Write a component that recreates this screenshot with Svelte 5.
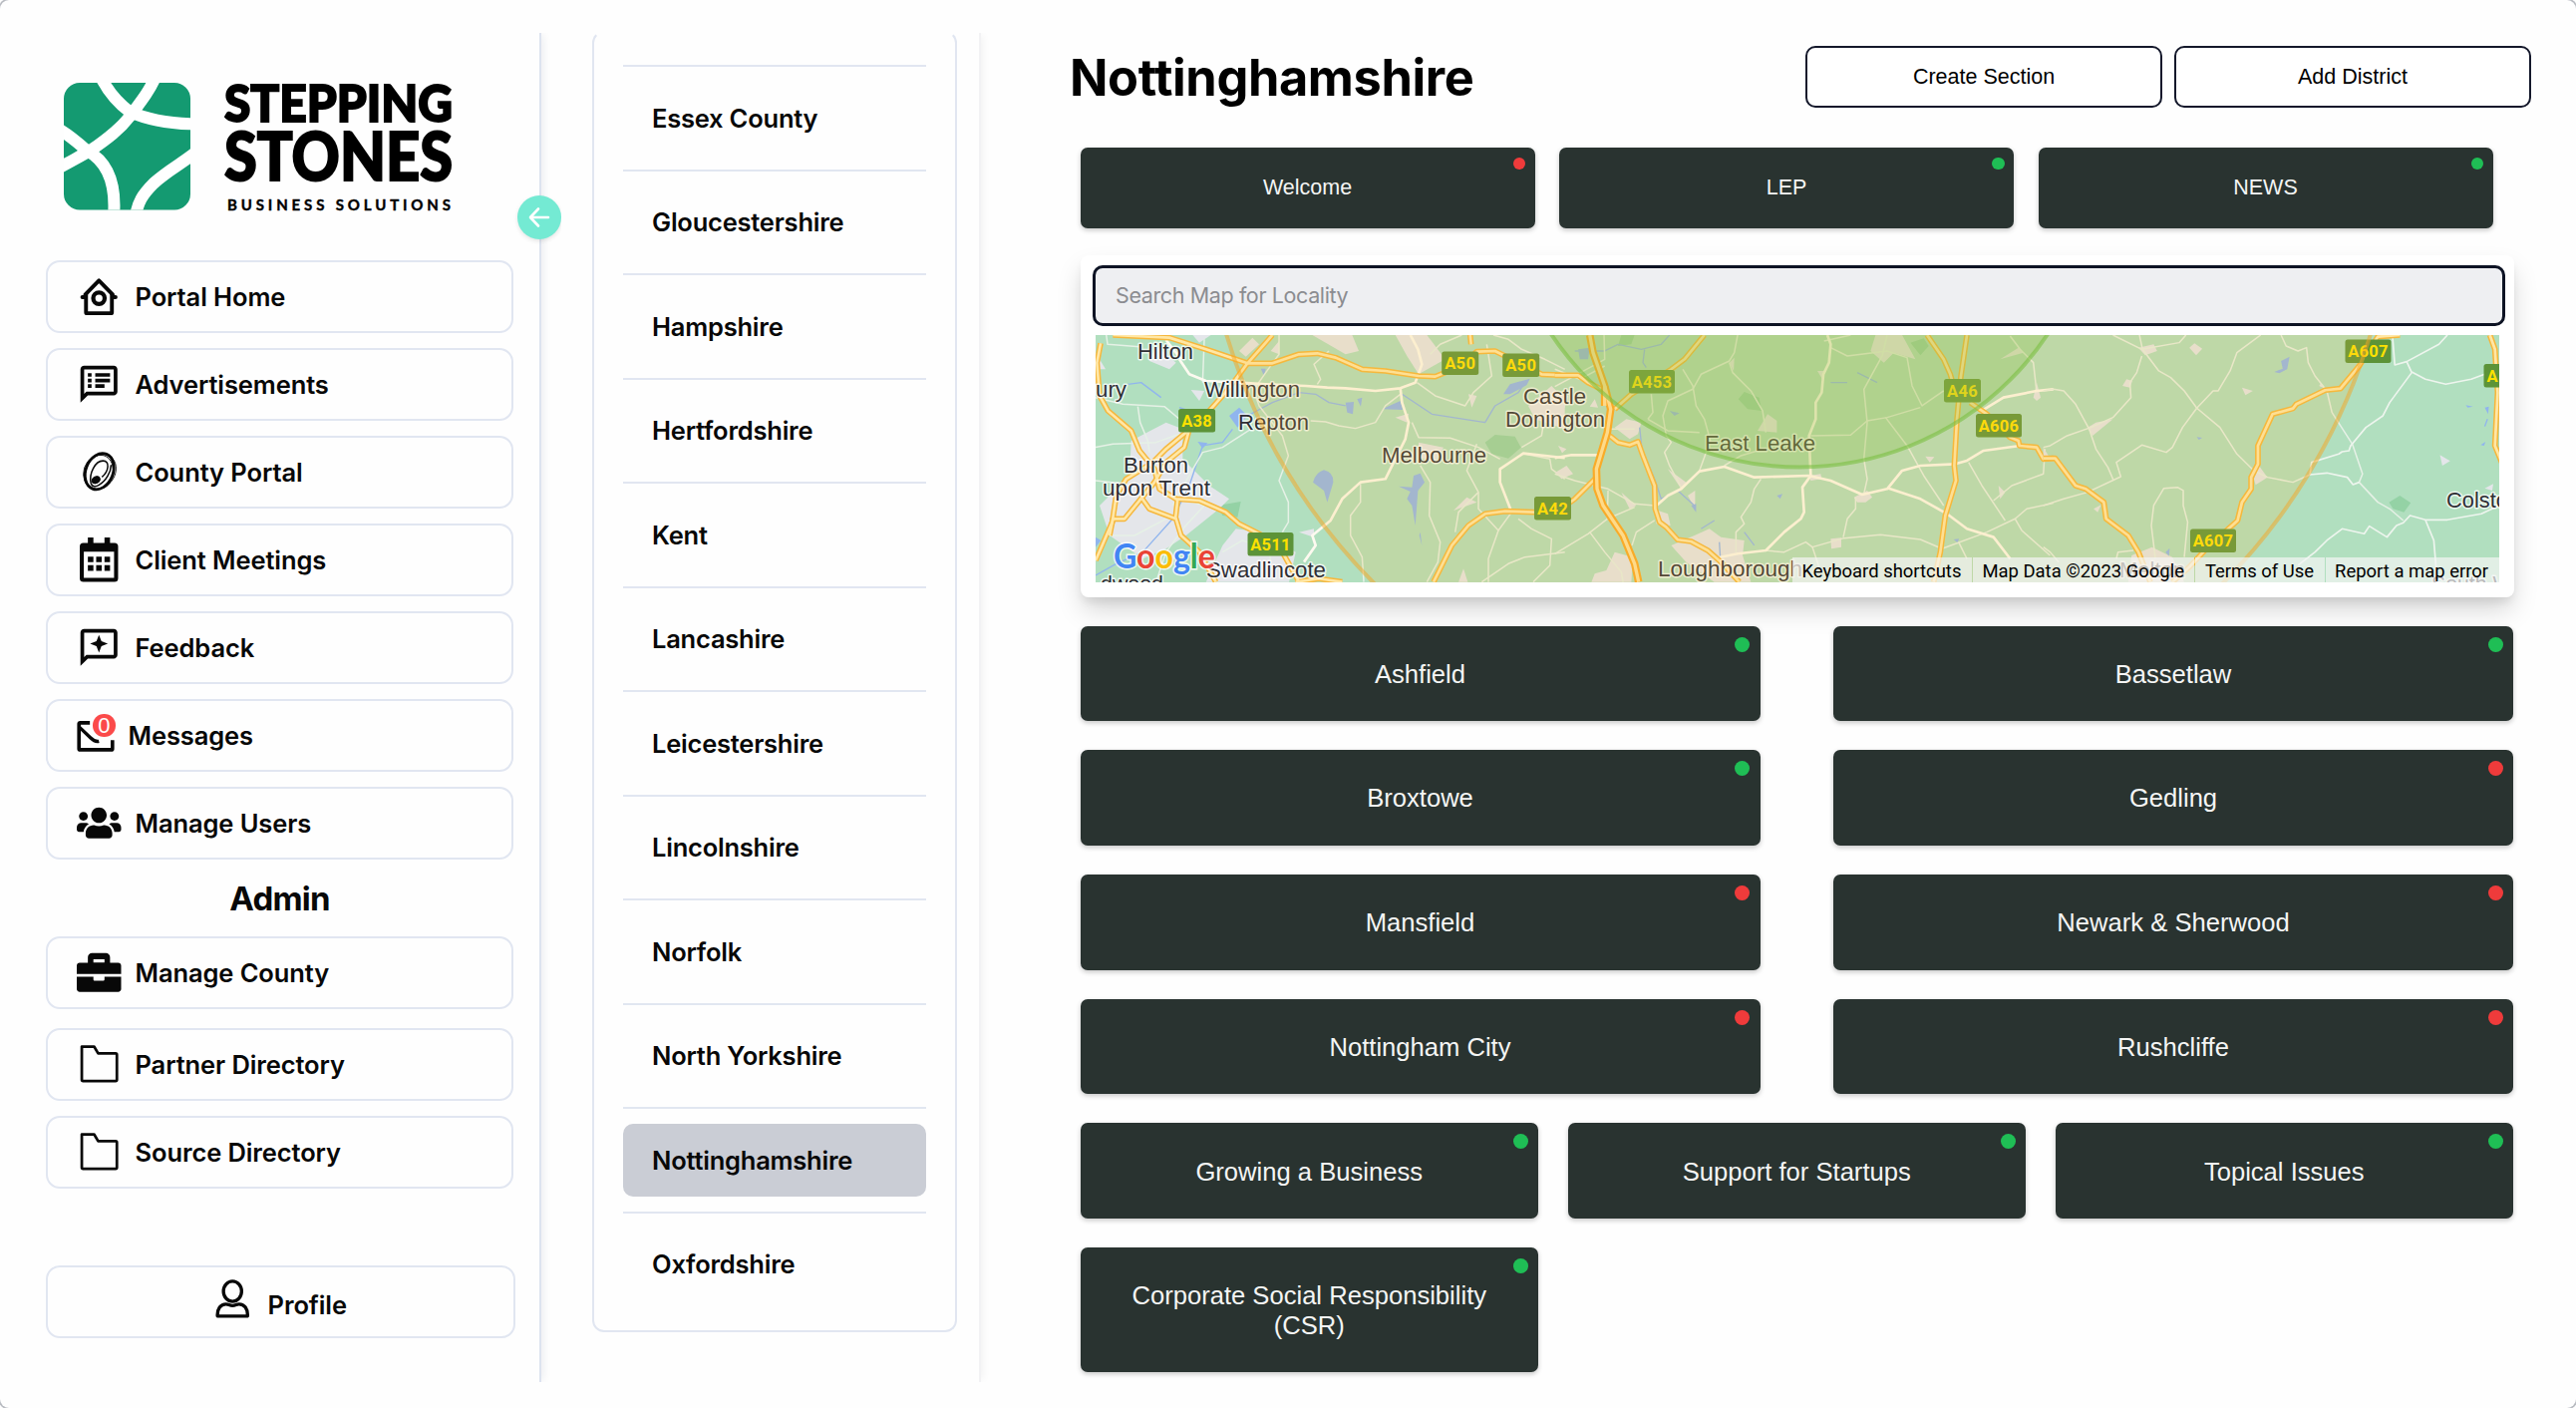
<script>
  const mainLinks = [
    { label: 'Portal Home', icon: 'home' },
    { label: 'Advertisements', icon: 'ads' },
    { label: 'County Portal', icon: 'county' },
    { label: 'Client Meetings', icon: 'calendar' },
    { label: 'Feedback', icon: 'feedback' },
    { label: 'Messages', icon: 'messages' },
    { label: 'Manage Users', icon: 'users' },
  ];
  const counties = [
    'Essex County', 'Gloucestershire', 'Hampshire', 'Hertfordshire', 'Kent', 'Lancashire',
    'Leicestershire', 'Lincolnshire', 'Norfolk', 'North Yorkshire', 'Nottinghamshire', 'Oxfordshire',
  ];
  const selected = 'Nottinghamshire';
  const sections = [
    { label: 'Welcome', live: false },
    { label: 'LEP', live: true },
    { label: 'NEWS', live: true },
  ];
  const districts = [
    { label: 'Ashfield', live: true },
    { label: 'Bassetlaw', live: true },
    { label: 'Broxtowe', live: true },
    { label: 'Gedling', live: false },
    { label: 'Mansfield', live: false },
    { label: 'Newark & Sherwood', live: false },
    { label: 'Nottingham City', live: false },
    { label: 'Rushcliffe', live: false },
  ];
  const topics = [
    { label: 'Growing a Business', live: true },
    { label: 'Support for Startups', live: true },
    { label: 'Topical Issues', live: true },
    { label: 'Corporate Social Responsibility (CSR)', live: true },
  ];

  // Map artwork. Each tile is drawn in its own coordinate space and scaled into place.
  const west = {
    towns: [
      'M195 365 L300 310 L350 330 L350 420 L430 500 L490 540 L460 570 L360 650 L300 690 L230 720 L130 650 L100 560 L190 470 Z',
      'M510 630 L590 640 L690 700 L670 790 L420 790 L470 680 Z',
      'M270 80 L330 130 L310 150 L250 125 Z', 'M520 95 L560 55 L580 75 L540 112 Z',
      'M615 95 L640 65 L640 105 Z', 'M740 47 L860 47 L880 95 L840 105 Z',
      'M990 47 L1085 47 L1140 120 L1060 165 L1025 110 Z', 'M1210 225 L1235 230 L1220 265 Z',
      'M990 295 L1030 283 L1025 310 Z', 'M1060 370 L1135 385 L1110 430 L1060 415 Z',
      'M1205 535 L1235 550 L1165 575 Z', 'M1180 790 L1195 750 L1208 790 Z',
      'M375 212 L415 215 L400 245 Z', 'M1390 260 L1460 200 L1500 240 L1500 330 L1410 300 Z',
      'M88 100 L118 150 L88 150 Z', 'M700 640 L745 630 L745 655 Z', 'M380 47 L435 47 L400 70 Z',
    ],
    parks: ['M1260 370 L1290 347 L1350 352 L1368 385 L1330 418 L1280 405 Z', 'M455 560 L525 548 L515 595 L470 590 Z', 'M215 655 L270 640 L240 690 Z'],
    water: [
      'M742 490 Q750 460 775 453 Q805 460 803 490 L785 550 L775 515 Z',
      'M1000 502 L1040 505 L1045 470 L1065 463 L1078 490 L1058 515 L1050 620 L1040 560 L1025 540 L1035 518 Z',
      'M950 270 L1005 245 L1012 272 Z', 'M840 250 L865 248 L862 285 L845 280 Z', 'M875 240 L890 235 L886 262 Z',
      'M1315 225 L1335 195 L1395 178 L1385 198 L1335 225 Z', 'M490 290 L520 265 L545 290 L515 325 Z',
      'M395 368 L425 372 L410 388 Z', 'M585 148 L600 148 L595 170 Z', 'M1065 640 L1070 680 L1062 650 Z', 'M88 655 L104 665 L88 685 Z',
    ],
    rivers: ['M88 770 L150 735 L230 700 L320 600 L370 500 L410 380 L470 370 L500 330', 'M185 195 L225 190 L285 235 M340 265 L400 285 M545 290 L620 250 L700 220 L750 225 L790 250 L840 260 M1010 225 L1100 285 L1260 310 L1290 260 L1360 220 L1380 190'],
    minor: [
      'M88 235 L170 255 L295 262 L340 300', 'M215 262 L222 310 L245 365 L250 400', 'M88 385 L140 375 L270 370 L340 345',
      'M120 47 L124 75 L220 82', 'M415 60 L410 190 M640 47 L640 105 L600 160 L565 210',
      'M755 195 L765 180 L745 135 L790 95', 'M555 190 L580 260 L650 350 L668 410 L640 485 L668 550 L668 610 L650 640',
      'M555 330 L470 385 L410 400 L375 460 L320 560', 'M735 305 L780 308 L820 320 L870 328 L930 310 L960 260 L1005 225',
      'M885 495 L885 550 L855 590 L855 650 L890 715 L895 790', 'M1040 310 L1060 355 L1155 357 L1240 385 L1305 420',
      'M1065 440 L1095 490 L1092 590 L1125 670 L1118 730 L1085 790', 'M1235 375 L1205 455 L1240 520 L1240 570 L1300 635 L1270 720 L1270 790',
      'M1340 580 L1300 635 M1360 600 L1400 630 L1460 660 L1455 740 L1405 790', 'M1250 790 L1330 735 L1380 715 L1500 700',
      'M1055 190 L1110 230 L1200 260 L1225 220 L1280 170 L1265 75 M1285 47 L1330 60 L1370 90 L1440 120 L1500 150',
      'M1170 640 L1180 580 L1240 520', 'M88 485 L180 495 M340 540 L415 560 L355 625 L300 700 L270 790',
      'M1095 105 L1125 75 L1190 47', 'M1380 405 L1455 420 L1460 450 L1500 480', 'M1370 385 L1430 350 L1440 290',
      'M130 650 L205 650 L300 600', 'M470 700 L530 665 L610 690 L615 730',
    ],
    secondary: [
      'M340 120 L370 165 L420 185 L520 190', 'M300 62 L345 120', 'M520 190 L600 195 L720 200 L785 205 L840 207 L930 215 L1005 207 L1050 190 L1070 135 L1058 90 L1035 47',
      'M1005 207 L1010 250 L1030 310 L1020 360 L990 420 L960 480 L885 490 L830 540 L795 605 L740 650 L750 680 L715 730',
      'M1500 417 L1375 403 L1305 450 L1305 490 L1340 580',
    ],
    majors: [
      'M140 47 L310 55 L420 90 L545 132 L620 132 L700 105 L755 102 L810 115 L890 150 L960 155 L1060 170 L1110 172 L1190 140 L1235 97 L1290 95 L1350 125 L1430 165 L1500 168',
      'M620 47 L545 132 L510 180 L470 230 L430 275 L360 340 L300 390 L260 430 L180 480 L150 530 L138 610 L88 725',
      'M370 330 L355 385 L300 430 L265 490 L175 600 L140 600 L130 650',
      'M103 72 L92 130 L100 230 L125 275 L195 335 L220 395 L265 450 L280 510 L330 540 L400 545 L480 580 L520 615 L590 650 L650 700 L700 790',
      'M225 535 L250 570 L330 600 L345 650 L400 700 L450 790', 'M335 540 L328 600', 'M690 790 L760 780 L830 790',
      'M1105 790 L1160 680 L1210 620 L1260 585 L1320 577 L1500 583', 'M1215 47 L1218 75',
    ],
  };
  const centre = {
    towns: [
      'M350 680 L420 650 L465 630 L500 655 L570 665 L565 710 L590 790 L480 790 L395 730 Z',
      'M180 700 L235 715 L230 790 L110 790 L120 765 L155 755 Z', 'M180 325 L215 300 L260 310 L250 345 L225 360 Z',
      'M950 95 L965 47 L1045 47 L1085 120 L1020 100 L990 130 Z', 'M610 335 L640 285 L668 305 L668 340 Z',
      'M400 530 L422 515 L422 570 Z', 'M310 575 L340 585 L348 620 L305 615 Z', 'M900 535 L940 515 L955 535 L935 550 L910 550 Z',
      'M830 660 L862 657 L862 685 L832 690 Z', 'M765 470 L800 465 L803 480 L770 485 Z', 'M2 460 L35 440 L55 465 L20 480 Z',
      'M105 262 L120 240 L130 265 Z', 'M1340 120 L1395 85 L1410 100 Z', 'M1440 235 L1450 190 L1462 235 L1450 245 Z',
      'M1335 500 L1355 520 L1340 540 Z', 'M1115 412 L1142 414 L1128 430 Z', 'M10 380 L35 390 L22 402 Z',
      'M340 450 L395 490 L380 510 Z', 'M200 520 L245 560 L225 570 Z', 'M790 155 L815 155 L805 180 Z',
      'M0 225 L40 230 L30 265 L0 280 Z', 'M525 130 L540 115 L538 155 Z',
    ],
    parks: ['M552 240 L570 218 L615 235 L622 275 L580 270 Z', 'M1070 70 L1110 57 L1125 80 L1100 108 Z', 'M200 47 L240 47 L230 75 L190 80 Z'],
    water: ['M70 90 L105 85 L100 120 L75 120 Z', 'M668 530 L685 525 L678 540 Z', 'M345 275 L375 282 L360 290 Z', 'M1200 662 L1216 660 L1212 672 Z', 'M410 560 L425 555 L425 580 Z'],
    rivers: ['M60 95 L150 95 L190 75 L260 90 L320 75 L345 47', 'M270 90 L265 130 L275 145 M255 325 L262 390 L300 480 L320 540 L370 515 L420 560', 'M910 160 L970 190 M830 190 L880 190', 'M495 670 L498 720 M570 640 L600 680 M480 605 L440 630'],
    minor: [
      'M550 47 L540 100 L525 125 L440 165 L415 210 L340 245 L325 290 L335 350 L350 370 L330 400 L345 440 L380 505',
      'M385 150 L415 200 L425 260 L450 300 L468 365 L435 455', 'M525 130 L535 160 L590 215 L625 275 L635 340',
      'M830 85 L880 110 L1000 95 L1060 115 L1075 200 L1105 260 L1170 215', 'M1000 47 L985 110 L930 210 L940 310 L930 420 L940 480 L930 525',
      'M770 350 L890 348 L940 305 L1000 295 L1100 265', 'M995 295 L1060 380 L1110 470 L1170 560', 'M810 65 L890 47',
      'M545 700 L545 640 L570 615 L560 595 L590 550 L600 510 L620 480', 'M905 535 L905 570 L880 600 L868 655',
      'M630 695 L690 700 L755 670 L775 685 L870 658 L980 648 L1100 662 L1165 690 L1300 640 L1385 600 L1420 570 L1500 553',
      'M1245 430 L1285 500 L1355 605 M1320 545 L1375 500 L1470 465 L1475 390', 'M1385 600 L1405 635 L1490 710',
      'M1370 50 L1400 90 L1440 130 L1450 220', 'M300 560 L240 555 L160 510 L60 485 L0 465', 'M160 515 L158 600 L100 645 L0 705',
      'M158 600 L240 565 M105 640 L150 700 L200 760 L205 790', 'M300 605 L245 640 L232 680 M0 150 L75 180 L150 140',
      'M160 330 L240 330 M280 300 L340 335 L435 340', 'M775 685 L800 760', 'M1215 670 L1240 720', 'M510 440 L560 410 L610 395',
      'M290 225 L295 280 L280 300', 'M0 202 L50 175 L150 120 L148 47',
    ],
    secondary: [
      'M820 47 L830 75 L825 130 L808 165 L803 220 L785 250 L785 300 L765 350 L770 470 L745 505 L750 580 L740 600 L690 640 L635 695 L550 705 L475 720',
      'M300 565 L340 530 L380 510 L435 457 L510 443 L600 475 L765 470 L830 485 L925 527 L1000 510 L1045 455 L1100 440 L1205 435 L1240 425 L1290 395 L1400 380',
      'M1000 507 L1100 540 L1180 585 L1240 630 L1320 655 L1370 720', 'M0 417 L50 408 L130 408', 'M1285 275 L1350 235 L1450 215 L1500 210',
    ],
    majors: [
      'M450 47 L390 120 L350 150 L230 225 L180 270', 'M0 168 L70 168 L100 190 L150 215',
      'M165 350 L190 370 L225 378 L250 368 L265 410 L300 500 L302 570 L315 610 L335 625 L370 663 L410 668 L460 695 L500 730 L555 790',
      'M0 583 L60 540 L125 475', 'M1120 47 L1170 120 L1190 165 L1200 200 M1240 47 L1222 170 L1210 300 L1202 440 L1207 485 L1175 590 L1160 700 L1140 790',
      'M1250 250 L1300 285 L1370 355 L1395 365 L1398 380 L1450 385 L1470 420 L1500 418',
    ],
    trunk: ['M105 47 L115 100 L150 200 L168 270 L158 340 L125 450 L127 510 L145 560 L205 650 L240 735 L252 790', 'M150 200 L150 260'],
  };
  const east = {
    towns: [
      'M280 85 L325 75 L335 95 L300 108 Z', 'M430 85 L445 72 L468 88 L450 108 Z', 'M233 200 L245 180 L262 185 L255 205 Z',
      'M130 325 L155 310 L205 300 L145 350 Z', 'M585 205 L617 215 L595 228 Z', 'M620 480 L635 440 L660 475 L625 498 Z',
      'M260 710 L320 685 L380 715 L415 790 L250 790 Z', 'M148 570 L170 558 L160 580 Z', 'M1168 408 L1198 426 L1175 440 Z',
      'M1300 508 L1325 495 L1322 515 Z', 'M812 200 L818 192 L830 208 Z', 'M0 385 L15 410 L0 415 Z',
    ],
    parks: ['M1018 550 L1050 530 L1082 552 L1062 580 L1030 570 Z'],
    water: ['M680 158 L705 148 L700 125 L725 112 L718 150 L695 162 Z', 'M1300 265 L1312 262 L1310 285 Z', 'M1244 258 L1265 262 L1250 265 Z', 'M1288 378 L1302 368 L1298 380 Z', 'M452 354 L468 356 L458 362 Z', 'M360 700 L372 688 L370 712 Z'],
    rivers: ['M1308 300 L1300 322'],
    minor: [
      'M205 47 L290 90 L400 70 L420 47 M283 47 L292 90 L340 155 L375 175 L415 215 L452 267 L520 325 L570 405 L620 455 L660 475 L735 490 L785 467',
      'M290 110 L275 160 L255 190 L258 235 L205 295 L140 325 L70 350 L20 380 L0 385', 'M0 215 L30 210 L60 215 L95 255 L135 330 L155 390 L190 445 L207 485',
      'M640 47 L570 100 L550 155 L515 215 L500 215 L452 267 L410 325 L380 385 L362 400 L290 378 L215 430 L228 473 L130 520 L60 540 L0 560',
      'M700 47 L715 80 L750 95 L775 85 L780 130 L800 170 L835 215 L850 280 L910 375 L940 465 L930 490 L985 550 L1020 570 L1060 605',
      'M330 720 L318 620 L325 560 L355 508 L395 505 L412 515 L412 560 L425 610 L415 715', 'M215 720 L220 700 L265 695', 'M0 685 L20 700 L45 730',
    ],
    secondary: [],
    outer: [
      'M1028 47 L1035 137 L1070 127 L1165 75 L1190 47', 'M1070 127 L1085 160 L1020 250 L1000 290 L950 325 L905 380 L900 395 L880 398 L870 405 L790 430 L785 467 L835 462 L895 475 L912 497 L930 490',
      'M1085 158 L1125 180 L1185 195 L1260 180 L1300 165', 'M750 740 L800 700 L835 665 L880 630 L945 645 L960 622 L1012 655 L1040 620 L1060 612 L1080 590 L1125 603 L1190 603 L1290 585 L1342 560',
      'M1125 603 L1150 665 L1160 790',
    ],
    majors: [
      'M1050 47 L985 52 L930 140 L875 208 L830 213 L745 255 L735 268 L675 285 L632 380 L632 435 L612 475 L612 510 L585 550 L572 605 L480 690 L430 745 L380 790',
      'M0 418 L35 418 L95 500 L125 510 L178 550 L185 600 L250 650 L280 700 L315 790', 'M1315 47 L1330 90 L1338 220 L1330 380 L1350 430',
    ],
  };
  const tiles = [
    { t: 'translate(-29.3 -15.7) scale(.33333)', d: west },
    { t: 'translate(460.7 -15.7) scale(.33333)', d: centre },
    { t: 'translate(950.7 -15.7) scale(.3406 .33333)', d: east },
  ];
  // Road shields, positioned by their centre.
  const shields = [
    { x: 101.6, y: 86, label: 'A38' }, { x: 365.7, y: 28.5, label: 'A50' }, { x: 426.7, y: 30.5, label: 'A50' },
    { x: 175.5, y: 210, label: 'A511' }, { x: 458.5, y: 174, label: 'A42' }, { x: 558, y: 47, label: 'A453' },
    { x: 869.5, y: 56, label: 'A46' }, { x: 906, y: 91, label: 'A606' }, { x: 1276.5, y: 16.5, label: 'A607' },
    { x: 1121, y: 206.5, label: 'A607' }, { x: 1411, y: 41, label: 'A52' },
  ];
  const places = [
    { x: 42, y: 24, w: 56, label: 'Hilton' }, { x: 0, y: 62, w: 31, label: 'ury' }, { x: 109, y: 62, w: 96, label: 'Willington' },
    { x: 143, y: 95, w: 71, label: 'Repton' }, { x: 28, y: 138, w: 65, label: 'Burton' }, { x: 7, y: 161, w: 108, label: 'upon Trent' },
    { x: 111, y: 243, w: 120, label: 'Swadlincote' }, { x: 5, y: 257, w: 63, label: 'dwood' },
    { x: 287, y: 128, w: 105, label: 'Melbourne' }, { x: 429, y: 69, w: 63, label: 'Castle' },
    { x: 411, y: 91.5, w: 100, label: 'Donington' }, { x: 611, y: 116, w: 111, label: 'East Leake' },
    { x: 564, y: 242, w: 145, label: 'Loughborough' }, { x: 1355, y: 173, w: 74, label: 'Colston' },
    { x: 1027, y: 243, w: 66, label: 'Melton' }, { x: 1340, y: 257, w: 104, label: 'South With' },
  ];
</script>

{#snippet icon(name)}
  {#if name === 'home'}
    <svg class="icon" viewBox="0 0 24 24" fill="none" stroke="currentColor" stroke-width="2.1" stroke-linejoin="round" stroke-linecap="round">
      <path d="M5 11v9.6a.5.5 0 0 0 .5.5h13a.5.5 0 0 0 .5-.5V11" />
      <path d="M3 12.4h1.6V11L12 3.4 19.400 11v1.400H21" />
      <circle cx="12" cy="13" r="3.100" stroke-width="2.300" />
    </svg>
  {:else if name === 'ads'}
    <svg class="icon" viewBox="0 0 24 24" fill="currentColor">
      <path d="M20 2H4c-1.1 0-2 .9-2 2v18l4-4h14c1.100 0 2-.9 2-2V4c0-1.100-.9-2-2-2zm0 14H5.200L4 17.200V4h16v12zM6 12h2v2H6zm0-3h2v2H6zm0-3h2v2H6zm4 6h5v2h-5zm0-3h8v2h-8zm0-3h8v2h-8z" />
    </svg>
  {:else if name === 'county'}
    <svg class="icon" viewBox="0 0 44 44" fill="none" stroke="currentColor">
      <ellipse cx="22.500" cy="21.500" rx="13.500" ry="18.500" transform="rotate(22 22.500 21.500)" stroke-width="2.800" />
      <ellipse cx="23.500" cy="21.500" rx="14.500" ry="18" transform="rotate(32 23 21.500)" stroke-width=".8" />
      <ellipse cx="21.500" cy="22.500" rx="14.500" ry="17.500" transform="rotate(18 22 22)" stroke-width=".8" />
      <path d="M25 27c7-6 8-16 1-16-8 0-14 13-12 22 1 4 5 4 8 2 7-4 12-13 12-20" stroke-width="1.500" />
      <ellipse cx="19" cy="30" rx="4.300" ry="3.200" transform="rotate(-30 19 30)" fill="currentColor" />
    </svg>
  {:else if name === 'calendar'}
    <svg class="icon" viewBox="0 0 44 44">
      <path fill="currentColor" fill-rule="evenodd" d="M11 0h5.500v5.500h11V0H33v5.500h4.500a3.500 3.500 0 0 1 3.500 3.500v31.500a3.500 3.500 0 0 1-3.500 3.500h-31A3.500 3.500 0 0 1 3 40.500V9a3.500 3.500 0 0 1 3.500-3.500H11zM7 14v26h30V14zM11 19h5.500v5.500H11zm8.250 0h5.500v5.500h-5.500zm8.250 0H33v5.500h-5.500zM11 27.500h5.500V33H11zm8.250 0h5.500V33h-5.500zm8.250 0H33V33h-5.500z" />
    </svg>
  {:else if name === 'feedback'}
    <svg class="icon" viewBox="0 0 24 24" fill="currentColor">
      <path d="M20 2H4c-1.100 0-2 .9-2 2v18l4-4h14c1.100 0 2-.9 2-2V4c0-1.100-.9-2-2-2zm0 14H5.200L4 17.200V4h16v12zM12 14.800l1.350-3.450L16.800 10l-3.450-1.350L12 5.200l-1.350 3.450L7.200 10l3.450 1.350z" />
    </svg>
  {:else if name === 'messages'}
    <span class="mail">
      <svg class="icon" viewBox="0 0 44 44" fill="none" stroke="currentColor" stroke-width="3.600" stroke-linejoin="round">
        <path d="M13 9.700H3.200a1 1 0 0 0-1 1V35.500a1 1 0 0 0 1 1h31.200a1 1 0 0 0 1-1V27" />
        <path d="M2.500 14l11 10.500q4.500 4.500 8.500 3.500" stroke-width="3.300" />
      </svg>
      <span class="count">0</span>
    </span>
  {:else if name === 'users'}
    <svg class="icon" viewBox="0 0 640 512" fill="currentColor">
      <path d="M96 224c35.300 0 64-28.700 64-64s-28.700-64-64-64-64 28.700-64 64 28.700 64 64 64zm448 0c35.300 0 64-28.700 64-64s-28.700-64-64-64-64 28.700-64 64 28.700 64 64 64zm32 32h-64c-17.600 0-33.500 7.100-45.100 18.600 40.300 22.100 68.900 62 75.100 109.400h66c17.700 0 32-14.300 32-32v-32c0-35.300-28.700-64-64-64zm-256 0c61.900 0 112-50.100 112-112S381.900 32 320 32 208 82.100 208 144s50.100 112 112 112zm76.800 32h-8.300c-20.800 10-43.900 16-68.500 16s-47.600-6-68.500-16h-8.300C179.600 288 128 339.600 128 403.200V432c0 26.500 21.500 48 48 48h288c26.500 0 48-21.500 48-48v-28.800c0-63.600-51.600-115.200-115.200-115.200zm-223.700-13.400C161.500 263.100 145.600 256 128 256H64c-35.300 0-64 28.700-64 64v32c0 17.700 14.300 32 32 32h65.900c6.300-47.400 34.900-87.300 75.200-109.400z" />
    </svg>
  {:else if name === 'briefcase'}
    <svg class="icon" viewBox="0 0 512 512" fill="currentColor">
      <path d="M320 336c0 8.840-7.160 16-16 16h-96c-8.840 0-16-7.160-16-16v-30H0v140c0 19 15 34 34 34h444c19 0 34-15 34-34V306H320v30zm158-192h-94V80c0-25.600-22.400-48-48-48H176c-25.600 0-48 22.400-48 48v64H34c-19 0-34 15-34 34v96h512v-96c0-19-15-34-34-34zm-158-4H192V104h128v36z" />
    </svg>
  {:else if name === 'folder'}
    <svg class="icon" viewBox="0 0 44 44" fill="none" stroke="currentColor" stroke-width="2.700" stroke-linejoin="round">
      <path d="M5 4.500h12.200l4 6.700H38.500a1.300 1.300 0 0 1 1.300 1.300V37.300a1.300 1.300 0 0 1-1.300 1.300H6.300A1.300 1.300 0 0 1 5 37.300Z" />
    </svg>
  {:else if name === 'person'}
    <svg class="icon" viewBox="0 0 44 44" fill="none" stroke="currentColor" stroke-width="3.300" stroke-linejoin="round">
      <ellipse cx="22" cy="13.800" rx="9" ry="10" />
      <path d="M7 37.500c0-6 3-11 8.500-11 2.500 0 3.500 1.500 6.500 1.500s4-1.500 6.500-1.500c5.500 0 8.500 5 8.500 11a1 1 0 0 1-1 1H8a1 1 0 0 1-1-1z" />
    </svg>
  {/if}
{/snippet}

{#snippet tile(item)}
  <button class="tile">
    <span>{item.label}</span>
    <i class="dot" class:live={item.live}></i>
  </button>
{/snippet}

<div class="app">
  <aside class="sidebar">
    <svg class="brand" viewBox="0 0 400 130">
      <defs><clipPath id="mark"><rect width="127" height="127.500" rx="16" /></clipPath></defs>
      <g clip-path="url(#mark)">
        <rect width="127" height="128" fill="#149a71" />
        <g fill="none" stroke="#fff" stroke-width="12">
          <path d="M92-6C86 8 78 18 66 34 56 47 44 56 28 67 18 73 8 78-6 86" />
          <path d="M37-6C44 8 54 20 66 29 84 37 104 41 132 41.500" />
          <path d="M-6 46C6 53 14 60 23 68 42 78 53 98 50 134" />
          <path d="M132 70C120 80 104 88 90 101 79 112 74 120 72 134" />
        </g>
      </g>
      <g class="brand-type">
        <text x="161" y="38.500" font-size="52" textLength="229" lengthAdjust="spacingAndGlyphs">STEPPING</text>
        <text x="161" y="98" font-size="66" textLength="229" lengthAdjust="spacingAndGlyphs">STONES</text>
        <text class="brand-sub" x="164" y="128" font-size="15" textLength="224">BUSINESS SOLUTIONS</text>
      </g>
    </svg>

    <nav class="links">
      {#each mainLinks as link}
        <a class="link" class:mail-link={link.icon === 'messages'}>{@render icon(link.icon)}<span>{link.label}</span></a>
      {/each}
    </nav>
    <h2>Admin</h2>
    <nav class="links admin">
      <a class="link first">{@render icon('briefcase')}<span>Manage County</span></a>
      <a class="link">{@render icon('folder')}<span>Partner Directory</span></a>
      <a class="link">{@render icon('folder')}<span>Source Directory</span></a>
    </nav>
    <a class="link profile">{@render icon('person')}<span>Profile</span></a>

    <button class="collapse" aria-label="Collapse">
      <svg viewBox="0 0 24 24" fill="none" stroke="#fff" stroke-width="2.600" stroke-linecap="round" stroke-linejoin="round"><path d="M21 12H3.500M11 3.500 3 12l8 8.500" /></svg>
    </button>
  </aside>

  <section class="county-pane">
    <ul class="counties">
      {#each counties as county}
        <li><span class="county" class:selected={county === selected}>{county}</span></li>
      {/each}
    </ul>
  </section>

  <main>
    <header>
      <h1>Nottinghamshire</h1>
      <div class="actions">
        <button class="outline">Create Section</button>
        <button class="outline">Add District</button>
      </div>
    </header>

    <div class="sections">
      {#each sections as item}{@render tile(item)}{/each}
    </div>

    <div class="map-card">
      <input type="text" placeholder="Search Map for Locality" />
      <div class="map">
        <svg viewBox="0 0 1408 248" preserveAspectRatio="none">
          <rect width="1408" height="248" fill="#b1dfbf" />
          {#each tiles as { t, d }}
            <g transform={t}>
              {#each d.parks as p}<path d={p} fill="#94d2a5" />{/each}
              {#each d.towns as p}<path d={p} fill="#e4e6ea" />{/each}
              {#each d.water as p}<path d={p} fill="#90b5ee" />{/each}
              <g class="lines">
                {#each d.rivers as p}<path d={p} stroke="#90b5ee" stroke-width="4" />{/each}
                {#each d.minor as p}<path d={p} stroke="#e6f1e6" stroke-width="4.500" />{/each}
                {#each d.outer ?? [] as p}<path d={p} stroke="#eef5ee" stroke-width="5" />{/each}
                {#each d.secondary as p}<path d={p} stroke="#fdfaf0" stroke-width="8" />{/each}
                {#each d.majors as p}<path d={p} stroke="#f6b73c" stroke-width="17" />{/each}
                {#each d.majors as p}<path d={p} stroke="#ffe7a6" stroke-width="8" />{/each}
                {#each d.trunk ?? [] as p}<path d={p} stroke="#f9a825" stroke-width="23" />{/each}
                {#each d.trunk ?? [] as p}<path d={p} stroke="#ffe19a" stroke-width="10" />{/each}
              </g>
            </g>
          {/each}
          {#each shields as s}
            {@const w = s.label.length === 3 ? 37 : 46}
            <rect x={s.x - w / 2} y={s.y - 12} width={w} height="23.500" rx="2.500" fill="#5c9338" />
            <text class="shield" x={s.x} y={s.y + 5.800}>{s.label}</text>
          {/each}
          {#each places as p}
            <text class="place" x={p.x} y={p.y} textLength={p.w} lengthAdjust="spacingAndGlyphs">{p.label}</text>
          {/each}
          <circle cx="705" cy="-172.500" r="599" fill="#fbbd3c" fill-opacity=".18" stroke="#f5a623" stroke-opacity=".5" stroke-width="4" />
          <circle cx="706" cy="-166.500" r="299" fill="#8bc34a" fill-opacity=".27" stroke="#7cc043" stroke-opacity=".6" stroke-width="4" />
        </svg>
        <svg class="google" viewBox="0 0 110 40">
          <text x="2" y="28.500" textLength="102" lengthAdjust="spacingAndGlyphs"><tspan fill="#4285f4">G</tspan><tspan fill="#ea4335">o</tspan><tspan fill="#fbbc05">o</tspan><tspan fill="#4285f4">g</tspan><tspan fill="#34a853">l</tspan><tspan fill="#ea4335">e</tspan></text>
        </svg>
        <div class="credits">
          <span>Keyboard shortcuts</span><span>Map Data ©2023 Google</span><span>Terms of Use</span><span>Report a map error</span>
        </div>
      </div>
    </div>

    <div class="districts">
      {#each districts as item}{@render tile(item)}{/each}
    </div>
    <div class="topics">
      {#each topics as item}{@render tile(item)}{/each}
    </div>
  </main>
</div>

<style>
  :global(body) { background: #fefefe; }
  * { box-sizing: border-box; }
  .app {
    display: flex;
    width: 2584px;
    height: 1412px;
    padding: 33px 0 26px;
    overflow: hidden;
    border-radius: 9px;
    box-shadow: 0 0 0 1.500px #b9bcc2;
    font-family: Inter, 'Liberation Sans', sans-serif;
    color: #080808;
  }
  button, input { font: inherit; margin: 0; }

  .sidebar {
    position: relative;
    display: flex;
    flex-direction: column;
    width: 543px;
    padding: 50px 24px 0 46px;
    border-right: 2px solid #dde3ef;
    box-shadow: 4px 0 8px -2px rgba(30, 40, 80, .08);
    clip-path: inset(0 -20px 0 0);
  }
  .brand { width: 400px; height: 130px; margin-left: 18px; flex: none; overflow: visible; }
  .brand-type { font-family: Lato, sans-serif; font-weight: 900; fill: #000; stroke: #000; stroke-width: 2px; }
  .brand-sub { font-weight: 700; stroke-width: .4px; }
  .links { display: flex; flex-direction: column; gap: 15px; margin-top: 48px; }
  .link {
    display: flex;
    align-items: center;
    gap: 14px;
    width: 469px;
    height: 73px;
    padding-left: 29px;
    border: 2px solid #e1e6f1;
    border-radius: 14px;
    font-size: 25.500px;
    font-weight: 600;
    letter-spacing: -.1px;
  }
  .icon { width: 44.500px; height: 44.500px; flex: none; }
  h2 { margin: 16px 0 0; width: 469px; height: 46px; line-height: 46px; text-align: center; font-size: 33px; font-weight: 700; letter-spacing: -.8px; }
  .links.admin { margin-top: 15px; }
  .link.first { margin-bottom: 3.500px; }
  .mail-link { gap: 7px; }
  .mail { position: relative; display: flex; }
  .count {
    position: absolute;
    left: 16px;
    top: 1px;
    width: 22.500px;
    height: 22.500px;
    border-radius: 50%;
    background: #fb4a4a;
    color: #fff;
    font-family: 'Liberation Sans', sans-serif;
    font-size: 22px;
    font-weight: 400;
    line-height: 23px;
    text-align: center;
    letter-spacing: 0;
  }
  .profile { width: 471px; margin-top: 77.500px; padding: 0 4px 5px 0; justify-content: center; gap: 13px; }
  .profile span { padding-top: 11px; }
  .collapse {
    position: absolute;
    left: 519px;
    top: 163px;
    width: 44px;
    height: 44px;
    padding: 10px;
    border: 0;
    border-radius: 50%;
    background: #74ead3;
    box-shadow: 0 2px 4px rgba(0, 0, 0, .1);
  }
  .collapse svg { display: block; width: 24px; height: 24px; }

  .county-pane {
    width: 441px;
    padding-left: 51px;
    border-right: 2px solid #f2f2f4;
    box-shadow: 5px 0 8px -3px rgba(0, 0, 0, .05);
    clip-path: inset(0 -20px 0 0);
  }
  .counties {
    width: 366px;
    height: 1305px;
    margin: -2px 0 0;
    padding: 32px 29px 0;
    list-style: none;
    border: 2px solid #e1e6f1;
    border-top-color: transparent;
    border-radius: 12px;
  }
  .counties li { display: flex; align-items: center; height: 104.500px; border-top: 2px solid #e1e6f1; }
  .county { flex: 1; height: 73px; line-height: 73px; padding-left: 29px; border-radius: 10px; font-size: 25.500px; font-weight: 600; letter-spacing: -.22px; }
  .county.selected { background: #cacdd5; }

  main { flex: 1; padding: 13px 45px 0 89px; }
  header { display: flex; justify-content: space-between; height: 62px; }
  h1 { margin: 0; line-height: 64px; font-size: 50.500px; font-weight: 700; letter-spacing: -.4px; color: #000; }
  .actions { display: flex; gap: 12px; }
  .outline {
    width: 358px;
    height: 62px;
    border: 2px solid #14182b;
    border-radius: 10px;
    background: #fff;
    font-family: 'Liberation Sans', sans-serif;
    font-size: 21.500px;
    color: #000;
  }

  .tile {
    position: relative;
    display: flex;
    align-items: center;
    justify-content: center;
    padding: 2px 44px 0;
    border: 0;
    border-radius: 7px;
    background: #293330;
    box-shadow: 0 2px 5px rgba(0, 0, 0, .22);
    color: #f4f5f4;
    font-family: 'Liberation Sans', sans-serif;
    font-size: 25.600px;
    line-height: 29.500px;
    text-align: center;
  }
  .dot { position: absolute; right: 10.500px; top: 11px; width: 15px; height: 15px; border-radius: 50%; background: #ef3b3b; }
  .dot.live { background: #1fbe55; }
  .sections { display: grid; grid-template-columns: repeat(3, 456px); gap: 24.500px; margin: 39.500px 0 0 10.500px; }
  .sections .tile { height: 81px; font-size: 21.500px; }
  .sections .dot { width: 12.500px; height: 12.500px; right: 9.500px; top: 10px; }

  .map-card {
    width: 1438px;
    height: 343px;
    margin: 27px 0 0 10.500px;
    padding: 10px 0 0 12.500px;
    border-radius: 8px;
    background: #fff;
    box-shadow: 0 14px 26px -2px rgba(0, 0, 0, .17), 0 6px 8px -2px rgba(0, 0, 0, .08);
  }
  input {
    display: block;
    width: 1417px;
    height: 61px;
    padding: 0 20px;
    border: 3px solid #0d1324;
    border-radius: 10px;
    background: #eeeff2;
    font-size: 21.500px;
    letter-spacing: -.38px;
    color: #222;
  }
  input::placeholder { color: #8b8c90; opacity: 1; }
  .map { position: relative; width: 1408px; height: 248px; margin: 9.500px 0 0 2.500px; overflow: hidden; }
  .map > svg { display: block; width: 1408px; height: 248px; }
  .lines { fill: none; stroke-linejoin: round; stroke-linecap: butt; }
  .place { font-family: 'Liberation Sans', sans-serif; font-size: 22px; fill: #2f2f35; stroke: #fff; stroke-opacity: .75; stroke-width: 3px; stroke-linejoin: round; paint-order: stroke; }
  .shield { font-family: Roboto, sans-serif; font-size: 16.500px; font-weight: 700; letter-spacing: .3px; fill: #ffe100; text-anchor: middle; }
  .map > .google { position: absolute; left: 16px; top: 205px; width: 110px; height: 40px; overflow: visible; }
  .google text { font-family: Lato, sans-serif; font-size: 34px; font-weight: 700; stroke: #fff; stroke-width: 3px; paint-order: stroke; stroke-opacity: .8; }
  .credits { position: absolute; right: 0; bottom: 0; display: flex; gap: 1px; height: 25.500px; font: 18.450px/28px Roboto, sans-serif; color: #000; }
  .credits span { padding: 0 10.500px 0 9.500px; background: rgba(245, 245, 245, .7); white-space: nowrap; }

  .districts { display: grid; grid-template-columns: 682px 682px; column-gap: 73.500px; row-gap: 29px; margin: 29px 0 0 10.500px; }
  .districts .tile { height: 95.700px; }
  .topics { display: grid; grid-template-columns: repeat(3, 459.500px); column-gap: 29.500px; row-gap: 29px; margin: 29px 0 0 10.500px; }
  .topics .tile { height: 96px; }
  .topics .tile:nth-child(4) { height: 125px; }
</style>
